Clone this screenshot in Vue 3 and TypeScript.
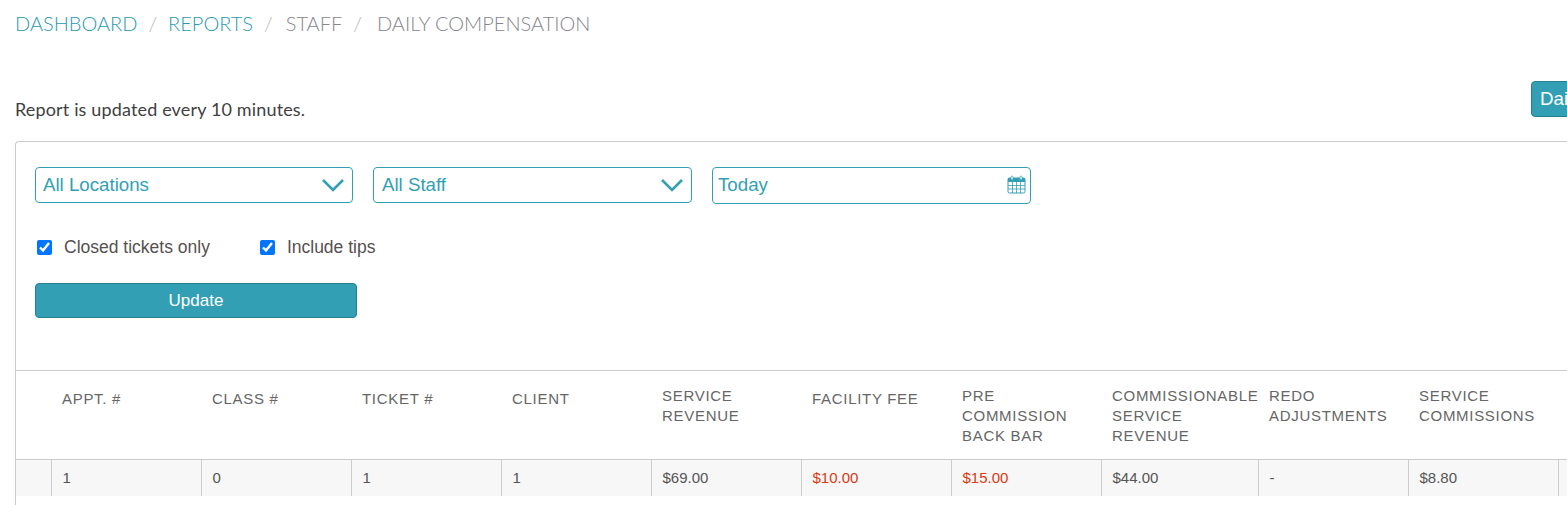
<script setup lang="ts">
const headers = [
  { text: '' },
  { text: 'APPT. #', single: true },
  { text: 'CLASS #', single: true },
  { text: 'TICKET #', single: true },
  { text: 'CLIENT', single: true },
  { text: 'SERVICE REVENUE' },
  { text: 'FACILITY FEE', single: true },
  { text: 'PRE COMMISSION BACK BAR' },
  { text: 'COMMISSIONABLE SERVICE REVENUE' },
  { text: 'REDO ADJUSTMENTS' },
  { text: 'SERVICE COMMISSIONS' },
  { text: '' },
]
const widths = [35, 150, 150, 150, 150, 150, 150, 150, 157, 150, 150, 150]
const row = [
  { text: '' },
  { text: '1' },
  { text: '0' },
  { text: '1' },
  { text: '1' },
  { text: '$69.00' },
  { text: '$10.00', red: true },
  { text: '$15.00', red: true },
  { text: '$44.00' },
  { text: '-' },
  { text: '$8.80' },
  { text: '' },
]
</script>

<template>
  <div class="page">
    <nav class="crumbs">
      <a class="link">DASHBOARD</a>
      <span class="sep">/</span>
      <a class="link">REPORTS</a>
      <span class="sep mid">/</span>
      <span>STAFF</span>
      <span class="sep last">/</span>
      <span>DAILY COMPENSATION</span>
    </nav>

    <div class="note-row">
      <p class="note">Report is updated every 10 minutes.</p>
      <button class="btn daily">Daily Compensation</button>
    </div>

    <section class="panel">
      <div class="filters">
        <div class="field select first">
          <span>All Locations</span>
          <svg width="26" height="14" viewBox="0 0 26 14">
            <path d="M3 2l10 10 10-10" fill="none" stroke="#329fb4" stroke-width="2.6" />
          </svg>
        </div>
        <div class="field select second">
          <span>All Staff</span>
          <svg width="26" height="14" viewBox="0 0 26 14">
            <path d="M3 2l10 10 10-10" fill="none" stroke="#329fb4" stroke-width="2.6" />
          </svg>
        </div>
        <div class="field date">
          <span>Today</span>
          <svg width="19" height="19" viewBox="0 0 19 19">
            <rect x="1" y="3" width="17" height="15" rx="1.5" fill="#fff" stroke="#329fb4" />
            <rect x="1" y="3" width="17" height="4" fill="#329fb4" />
            <path d="M1 10.5h17M1 14h17M5.5 7v11M9.5 7v11M13.5 7v11" stroke="#329fb4" stroke-width="0.8" />
            <rect x="4" y="1" width="2" height="4" rx="1" fill="#fff" stroke="#329fb4" stroke-width="0.7" />
            <rect x="13" y="1" width="2" height="4" rx="1" fill="#fff" stroke="#329fb4" stroke-width="0.7" />
          </svg>
        </div>
      </div>

      <div class="checks">
        <label class="check"><input type="checkbox" checked> Closed tickets only</label>
        <label class="check"><input type="checkbox" checked> Include tips</label>
      </div>

      <button class="btn update">Update</button>

      <table class="grid">
        <colgroup>
          <col v-for="(w, i) in widths" :key="i" :style="{ width: w + 'px' }">
        </colgroup>
        <thead>
          <tr>
            <th v-for="(h, i) in headers" :key="i" :class="{ single: h.single }">{{ h.text }}</th>
          </tr>
        </thead>
        <tbody>
          <tr>
            <td v-for="(c, i) in row" :key="i" :class="{ red: c.red }">{{ c.text }}</td>
          </tr>
        </tbody>
      </table>
    </section>
  </div>
</template>

<style>
html,
body {
  overflow: hidden;
  background: #fff;
}
</style>

<style scoped>
.page {
  width: 1900px;
  height: 505px;
  padding-left: 15px;
  box-sizing: border-box;
  font-family: "Liberation Sans", Arial, sans-serif;
  color: #4a4a4a;
}

.crumbs {
  display: flex;
  align-items: center;
  height: 46px;
  font-family: Lato, sans-serif;
  font-weight: 300;
  font-size: 20px;
  color: #85858c;
}

.link {
  color: #2a9ab3;
}

.sep {
  margin: 0 11px;
  color: #b5b5b5;
}

.sep.mid {
  margin-right: 13px;
}

.sep.last {
  margin-right: 15px;
}

.note-row {
  display: flex;
  align-items: flex-start;
  width: 1880px;
  height: 95px;
  padding-top: 35px;
  box-sizing: border-box;
}

.note {
  margin: 18px 0 0;
  width: 1516px;
  font-family: Lato, sans-serif;
  font-size: 18px;
  letter-spacing: 0.15px;
  line-height: 20px;
  color: #3f3f3f;
}

.btn {
  border: 1px solid #26808f;
  border-radius: 4px;
  background: #329fb4;
  color: #fff;
  font-family: "Liberation Sans", Arial, sans-serif;
}

.daily {
  height: 36px;
  padding: 0 8px;
  font-size: 18.7px;
  white-space: nowrap;
}

.panel {
  width: 1800px;
  height: 364px;
  border: 1px solid #ccc;
  border-bottom: 0;
  border-radius: 4px 0 0 0;
  box-sizing: border-box;
  padding-top: 25px;
}

.filters {
  display: flex;
  padding-left: 19px;
}

.field {
  display: flex;
  align-items: center;
  justify-content: space-between;
  box-sizing: border-box;
  border: 1px solid #329fb4;
  border-radius: 4px;
  color: #329fb4;
  font-size: 18.7px;
}

.select {
  height: 36px;
  padding: 0 6px 0 7px;
}

.first {
  width: 318px;
  margin-right: 20px;
}

.second {
  width: 319px;
  margin-right: 20px;
  padding-left: 8px;
}

.date {
  width: 319px;
  height: 37px;
  padding: 0 4px 2px 5px;
}

.checks {
  display: flex;
  padding: 33px 0 0 21px;
  height: 46px;
  box-sizing: content-box;
}

.check {
  display: flex;
  align-items: center;
  height: 20px;
  margin-right: 50px;
  font-size: 17.5px;
  color: #565150;
}

.check input {
  width: 15px;
  height: 15px;
  margin: 0 12px 0 0;
}

.update {
  display: block;
  width: 322px;
  height: 35px;
  margin: 0 0 0 19px;
  font-size: 17px;
}

.grid {
  margin-top: 52px;
  table-layout: fixed;
  width: 1692px;
  border-collapse: collapse;
}

th {
  height: 89px;
  box-sizing: border-box;
  padding: 15px 11px 0;
  border-top: 1px solid #ccc;
  border-bottom: 1px solid #ccc;
  font-weight: 400;
  font-size: 15px;
  line-height: 20px;
  letter-spacing: 0.7px;
  text-align: left;
  color: #666;
  vertical-align: top;
}

th.single {
  padding-top: 18px;
}

td {
  height: 36px;
  box-sizing: border-box;
  padding: 0 11px 1px;
  background: #f7f7f7;
  border-right: 1px solid #ccc;
  font-size: 15px;
  color: #555;
}

td.red {
  color: #d93a12;
}
</style>
